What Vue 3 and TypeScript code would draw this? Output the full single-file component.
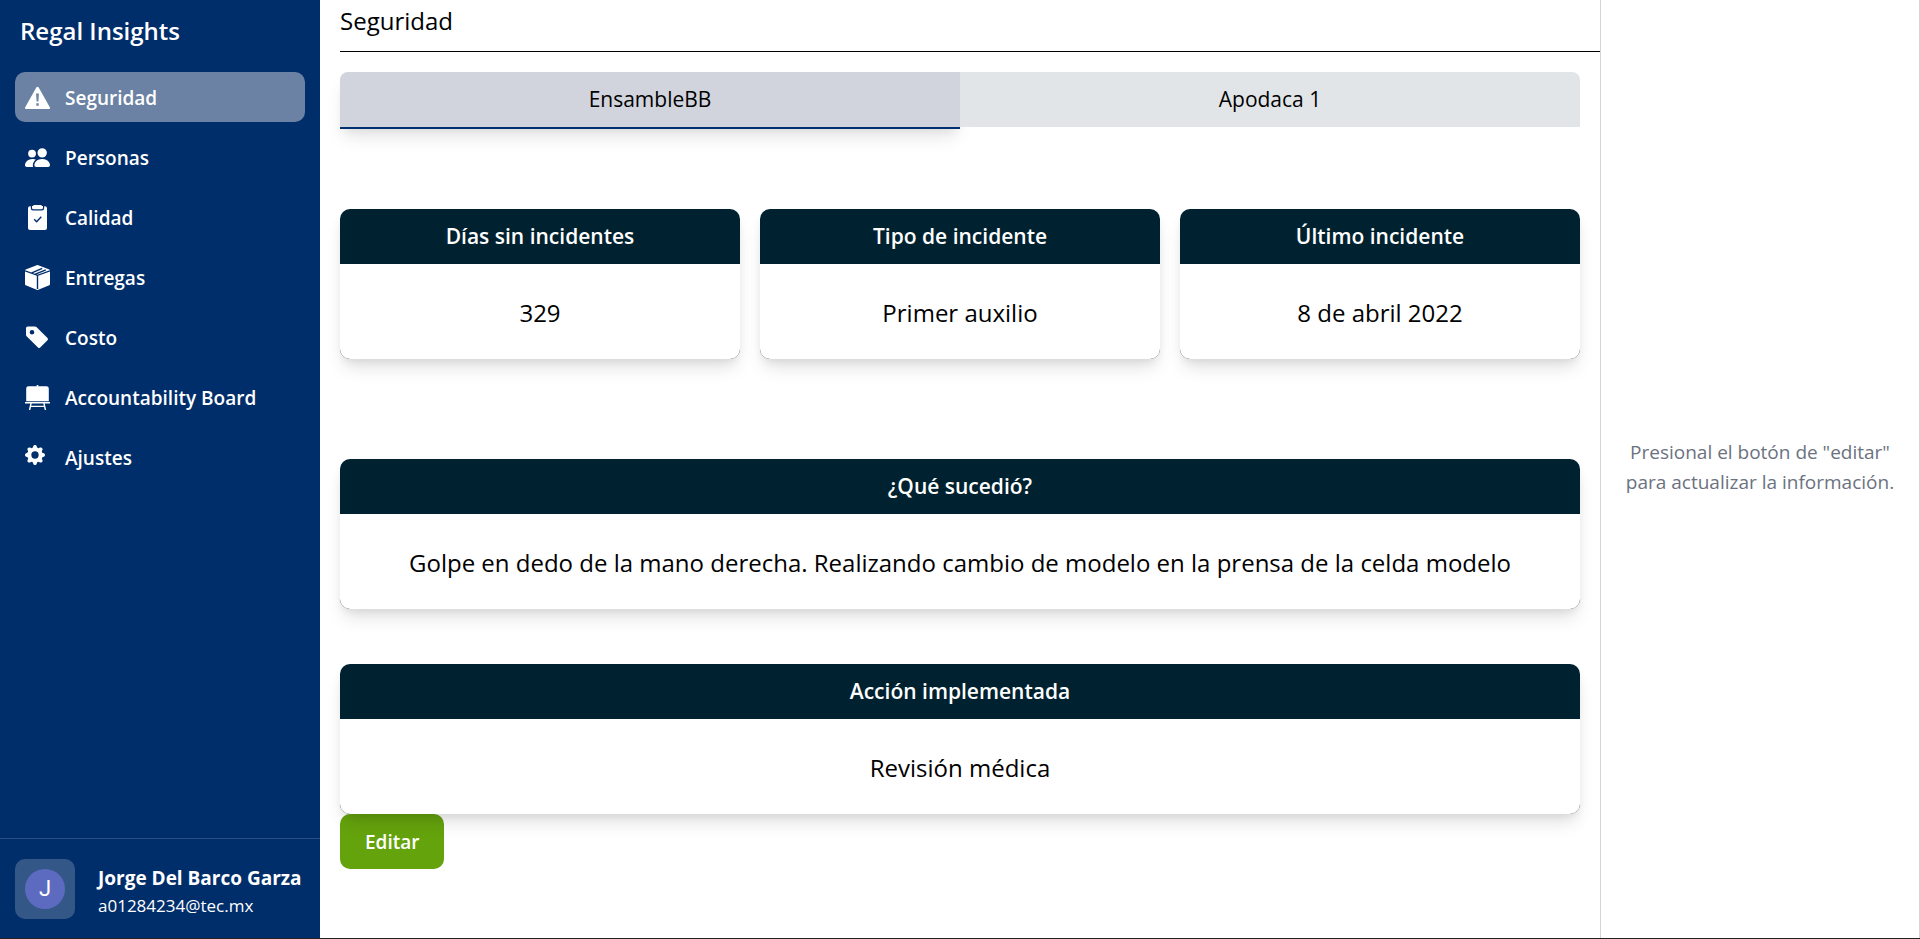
<script setup lang="ts">
import { ref } from 'vue'

interface NavItem {
  label: string
  viewBox: string
  path: string
  lines?: string
  small?: boolean
}

interface Card {
  title: string
  value: string
}

const navItems: NavItem[] = [
  {
    label: 'Seguridad',
    viewBox: '0 0 25 25',
    path: 'M11.3 2.4a1.4 1.4 0 0 1 2.4 0L24.8 22.3a1.1 1.1 0 0 1-1 1.7H1.2a1.1 1.1 0 0 1-1-1.7zM11.1 8.5l.5 8h1.8l.5-8zM11.3 18.2v2.5h2.4v-2.5z',
  },
  {
    label: 'Personas',
    viewBox: '0 0 16 16',
    path: 'M7 14s-1 0-1-1 1-4 5-4 5 3 5 4-1 1-1 1zm4-6a3 3 0 1 0 0-6 3 3 0 0 0 0 6m-5.784 6A2.24 2.24 0 0 1 5 13c0-1.355.68-2.75 1.936-3.72A6.3 6.3 0 0 0 5 9c-4 0-5 3-5 4s1 1 1 1zM4.5 8a2.5 2.5 0 1 0 0-5 2.5 2.5 0 0 0 0 5',
  },
  {
    label: 'Calidad',
    viewBox: '0 0 25 25',
    path: 'M9.500 0h6a1.500 1.500 0 0 1 1.500 1h1v1.800a1.500 1.500 0 0 1-1.500 1.500h-8A1.500 1.500 0 0 1 7 2.800V1h1a1.500 1.500 0 0 1 1.500-1zM5 1.300h.8v2A2.300 2.300 0 0 0 8.100 5.600h8.800a2.300 2.300 0 0 0 2.300-2.300v-2h.8a2 2 0 0 1 2 2V23a2 2 0 0 1-2 2H5a2 2 0 0 1-2-2V3.300a2 2 0 0 1 2-2z',
    lines: 'M9.200 14.300l2.400 2.400 4.700-5',
  },
  {
    label: 'Entregas',
    viewBox: '0 0 25 25',
    path: 'M11.700.2a2 2 0 0 1 1.600 0L24.300 4.500a1.100 1.100 0 0 1 .7 1V19.300a1.100 1.100 0 0 1-.7 1L13.300 24.800a2 2 0 0 1-1.600 0L.7 20.300a1.100 1.100 0 0 1-.7-1V5.500a1.100 1.100 0 0 1 .7-1z',
    lines: 'M0 5.800L12.500 10.300 25 5.800M12.500 10.300V24M6.800 7.900L17.200 3.400M10.400 9.200L20.800 4.900',
  },
  {
    label: 'Costo',
    viewBox: '0 0 25 25',
    path: 'M1 3.2A1.700 1.700 0 0 1 2.700 1.500H10a2 2 0 0 1 1.400.6L22.500 13a1.600 1.600 0 0 1 0 2.200l-7.300 7.200a1.600 1.600 0 0 1-2.200 0L1.600 11.200A2 2 0 0 1 1 9.800zM7 5a2.300 2.300 0 1 0 0 4.600A2.300 2.300 0 0 0 7 5z',
  },
  {
    label: 'Accountability Board',
    viewBox: '0 0 25 25',
    path: 'M11.700 0h1.600v1.200H21.500A2.300 2.300 0 0 1 23.800 3.500V16.300H1.200V3.500A2.300 2.300 0 0 1 3.500 1.200h8.200zM0 17h25v1.500h-5.300l1.500 6.500h-1.500l-.7-3H6l-.7 3H3.800l1.500-6.500H0zM6.700 18.500l-.5 2.200h12.600l-.5-2.200z',
  },
  {
    label: 'Ajustes',
    viewBox: '0 0 16 16',
    small: true,
    path: 'M9.405 1.05c-.413-1.4-2.397-1.4-2.81 0l-.1.34a1.464 1.464 0 0 1-2.105.872l-.31-.17c-1.283-.698-2.686.705-1.987 1.987l.169.311c.446.82.023 1.841-.872 2.105l-.34.1c-1.4.413-1.4 2.397 0 2.81l.34.1a1.464 1.464 0 0 1 .872 2.105l-.17.31c-.698 1.283.705 2.686 1.987 1.987l.311-.169a1.464 1.464 0 0 1 2.105.872l.1.34c.413 1.4 2.397 1.4 2.81 0l.1-.34a1.464 1.464 0 0 1 2.105-.872l.31.17c1.283.698 2.686-.705 1.987-1.987l-.169-.311a1.464 1.464 0 0 1 .872-2.105l.34-.1c1.4-.413 1.4-2.397 0-2.81l-.34-.1a1.464 1.464 0 0 1-.872-2.105l.17-.31c.698-1.283-.705-2.686-1.987-1.987l-.311.169a1.464 1.464 0 0 1-2.105-.872zM8 10.93a2.929 2.929 0 1 1 0-5.86 2.929 2.929 0 0 1 0 5.858z',
  },
]

const activeNav = ref('Seguridad')
const tabs = ['EnsambleBB', 'Apodaca 1']
const activeTab = ref(tabs[0])

const summary: Card[] = [
  { title: 'Días sin incidentes', value: '329' },
  { title: 'Tipo de incidente', value: 'Primer auxilio' },
  { title: 'Último incidente', value: '8 de abril 2022' },
]
const details: Card[] = [
  {
    title: '¿Qué sucedió?',
    value: 'Golpe en dedo de la mano derecha. Realizando cambio de modelo en la prensa de la celda modelo',
  },
  { title: 'Acción implementada', value: 'Revisión médica' },
]
</script>

<template>
  <div class="layout">
    <aside class="sidebar">
      <h1 class="brand">Regal Insights</h1>
      <nav class="nav">
        <a
          v-for="item in navItems"
          :key="item.label"
          href="#"
          class="nav-link"
          :class="{ active: item.label === activeNav }"
          @click.prevent="activeNav = item.label"
        >
          <svg class="nav-icon" :class="{ small: item.small }" :viewBox="item.viewBox" aria-hidden="true">
            <path :d="item.path" fill="currentColor" fill-rule="evenodd" />
            <path v-if="item.lines" class="icon-lines" :d="item.lines" />
          </svg>
          <span>{{ item.label }}</span>
        </a>
      </nav>
      <div class="profile">
        <div class="avatar"><span class="avatar-disc">J</span></div>
        <div>
          <div class="name">Jorge Del Barco Garza</div>
          <div class="mail">a01284234@tec.mx</div>
        </div>
      </div>
    </aside>

    <main class="content">
      <h2 class="title">Seguridad</h2>
      <div class="body">
        <div class="tabs" role="tablist">
          <button
            v-for="tab in tabs"
            :key="tab"
            type="button"
            role="tab"
            class="tab"
            :class="{ active: tab === activeTab }"
            :aria-selected="tab === activeTab"
            @click="activeTab = tab"
          >
            {{ tab }}
          </button>
        </div>
        <div class="summary">
          <section v-for="card in summary" :key="card.title" class="card">
            <h3 class="card-title">{{ card.title }}</h3>
            <p class="card-value">{{ card.value }}</p>
          </section>
        </div>
        <div class="details">
          <section v-for="card in details" :key="card.title" class="card">
            <h3 class="card-title">{{ card.title }}</h3>
            <p class="card-value">{{ card.value }}</p>
          </section>
        </div>
        <button type="button" class="edit">Editar</button>
      </div>
    </main>

    <aside class="panel">
      <p>Presional el botón de "editar" para actualizar la información.</p>
    </aside>
  </div>
</template>

<style>
body {
  margin: 0;
}
</style>

<style scoped>
.layout {
  box-sizing: border-box;
  display: grid;
  grid-template-columns: 320px minmax(0, 1fr) 320px;
  min-height: 100vh;
  border-bottom: 1px solid #222;
  background: #fff;
  color: #000;
  font-family: 'Segoe UI', 'Open Sans', 'Noto Sans', sans-serif;
  font-size: 19px;
  line-height: 30px;
}

h1,
h2,
h3,
p {
  margin: 0;
}

button {
  border: 0;
  font: inherit;
  cursor: pointer;
}

.sidebar {
  display: flex;
  flex-direction: column;
  background: #002e6a;
  color: #fff;
}

.brand {
  padding: 13px 20px 24px;
  font-size: 24px;
  font-weight: 600;
  line-height: 35px;
}

.nav {
  display: flex;
  flex: 1;
  flex-direction: column;
  gap: 10px;
  padding: 0 15px;
}

.nav-link {
  display: flex;
  gap: 15px;
  padding: 11px 10px 9px;
  border-radius: 10px;
  color: #fff;
  font-weight: 600;
  text-decoration: none;
}

.nav-link.active {
  background: #6b82a4;
}

.nav-icon {
  flex: none;
  width: 25px;
  height: 25px;
  margin-top: 2px;
}

.nav-icon.small {
  width: 20px;
  height: 20px;
  margin-right: 5px;
}

.icon-lines {
  fill: none;
  stroke: #002e6a;
  stroke-width: 1.4;
}

.profile {
  display: flex;
  align-items: center;
  gap: 23px;
  padding: 20px 15px 19px;
  border-top: 1px solid #2b4d7f;
  white-space: nowrap;
}

.avatar {
  display: grid;
  place-items: center;
  width: 60px;
  height: 60px;
  border-radius: 10px;
  background: #335887;
}

.avatar-disc {
  width: 40px;
  height: 40px;
  border-radius: 50%;
  background: #5c6bc0;
  font-family: Roboto, sans-serif;
  font-size: 22px;
  line-height: 40px;
  text-align: center;
}

.name {
  padding-top: 2px;
  font-weight: 700;
  line-height: 30px;
}

.mail {
  font-size: 17px;
  line-height: 25px;
}

.title {
  margin-left: 20px;
  padding: 3px 0 13px;
  border-bottom: 1px solid #000;
  font-size: 24px;
  font-weight: 400;
  line-height: 35px;
}

.body {
  padding: 20px;
}

.tabs {
  display: grid;
  grid-template-columns: 1fr 1fr;
  height: 55px;
}

.tab {
  height: 55px;
  padding: 0 0 1px;
  box-sizing: border-box;
  background: #e2e5e8;
  color: #000;
  font-size: 21px;
}

.tab:first-child {
  border-top-left-radius: 8px;
}

.tab:last-child {
  border-top-right-radius: 8px;
}

.tab.active {
  height: 57px;
  border-bottom: 2px solid #003070;
  background: #d1d4dc;
  box-shadow: 0 12px 18px -4px rgba(0, 0, 0, 0.1), 0 5px 8px -3px rgba(0, 0, 0, 0.06);
}

.summary {
  display: grid;
  grid-template-columns: repeat(3, 1fr);
  gap: 20px;
  padding: 82px 0 100px;
}

.details {
  display: grid;
  gap: 55px;
}

.card {
  overflow: hidden;
  border-radius: 10px;
  background: #002230;
  box-shadow: 0 12px 18px -4px rgba(0, 0, 0, 0.12), 0 4px 8px -2px rgba(0, 0, 0, 0.08);
  text-align: center;
}

.card-title {
  padding: 10px;
  color: #fff;
  font-size: 21px;
  font-weight: 600;
  line-height: 35px;
}

.card-value {
  padding: 31px 30px 29px;
  background: #fff;
  font-size: 24px;
  line-height: 35px;
}

.edit {
  display: block;
  padding: 13px 25px 12px;
  border-radius: 10px;
  background: #65a30d;
  color: #fff;
  font-weight: 600;
}

.panel {
  display: grid;
  place-items: center;
  padding: 0 20px 4px;
  border-right: 1px solid #d1d5db;
  border-left: 1px solid #d1d5db;
  color: #6b7280;
  text-align: center;
}
</style>
